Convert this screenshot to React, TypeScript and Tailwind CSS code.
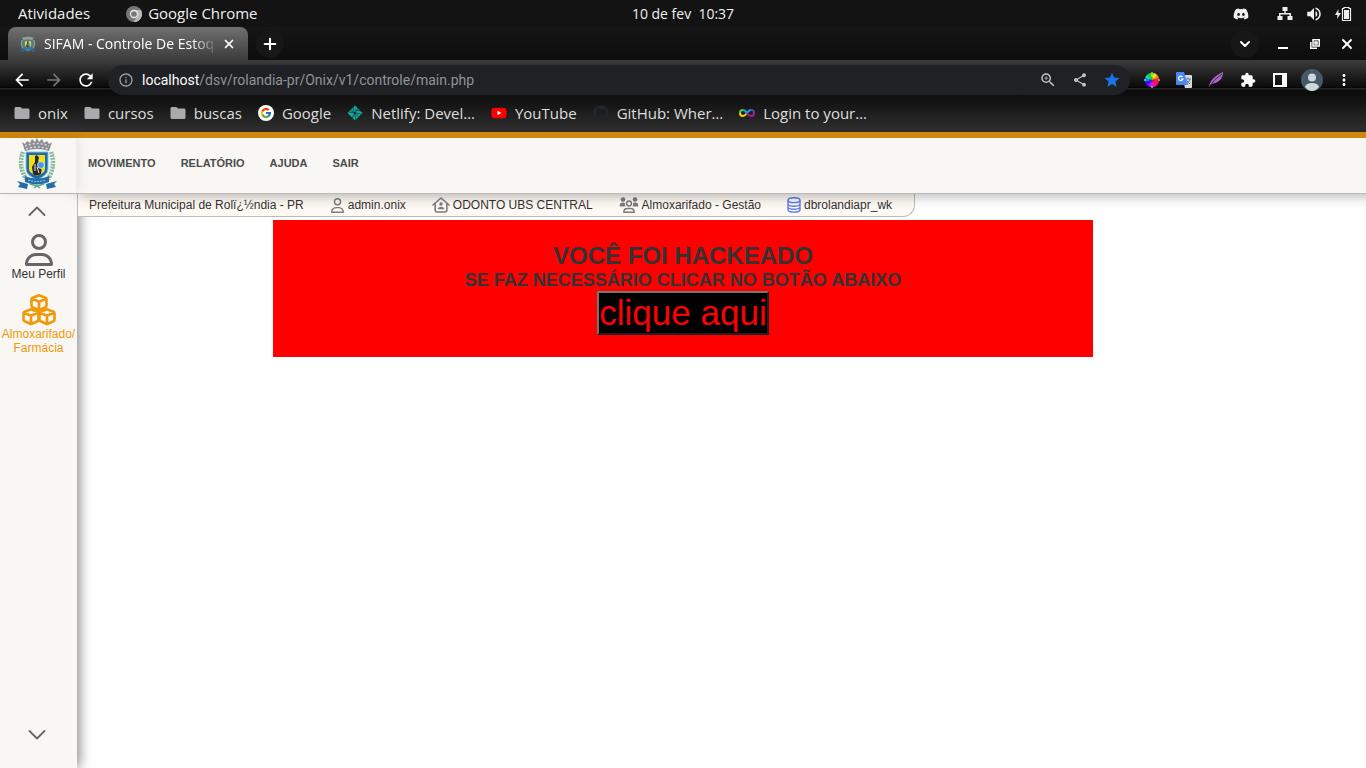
import React from "react";
import { MdArrowBack, MdArrowForward, MdRefresh, MdInfoOutline, MdZoomIn, MdShare, MdStar, MdExtension, MdMoreVert, MdFolder, MdVolumeUp } from "react-icons/md";
import { FaDiscord, FaRegUser, FaYoutube, FaGithub } from "react-icons/fa6";
import { FcGoogle } from "react-icons/fc";
import { ChevronDown, Plus, X } from "lucide-react";

function Crest({ className }: { className: string }) {
  return (
    <svg viewBox="0 0 40 52" preserveAspectRatio="none" className={className} aria-hidden="true">
      <path d="M6 14Q1 28 9 41M34 14Q39 28 31 41" fill="none" stroke="#7cc4a0" strokeWidth="4.500" strokeDasharray="2 1" />
      <path d="M4 16Q0 29 8 40M36 16Q40 29 32 40" fill="none" stroke="#d98275" strokeWidth="1.400" strokeDasharray="1 3" />
      <path d="M5 4l3 2 2-3 3 2 2-4 3 3 2-4 2 4 3-3 2 4 3-2 2 3 3-2-3 9q-12-4-24 0z" fill="#8b8e92" />
      <path d="M8 8q12-5 24 0M9 11q11-4 22 0" fill="none" stroke="#d8dadc" strokeWidth="1.500" strokeDasharray="2 2" />
      <path d="M9 14h22v17q0 6-11 11Q9 37 9 31z" fill="#1b6bb0" stroke="#8fbddd" strokeWidth="1" />
      <path d="M12 17h16v14q0 4-8 7-8-3-8-7z" fill="#f5df14" />
      <path d="M18 18q3-2 4 2l-1 3 4 4-1 9q-5 3-8 0l-1-7 3-5z" fill="#24282e" />
      <circle cx="24" cy="27" r="3.500" fill="#4f9ad0" stroke="#eee" strokeWidth=".8" />
      <path d="M18 26v7M20 29l2 6" stroke="#eee" strokeWidth="1" />
      <path d="M8 38q12 5 24 0v6q-12 5-24 0zM0 43l11 3-1 5-9-2 2-3zM40 43l-11 3 1 5 9-2-2-3z" fill="#246da9" />
      <path d="M11 42q9 3 18 0" fill="none" stroke="#9ec9e6" strokeWidth="1" strokeDasharray="2 1" />
      <path d="M13 46l7 2 7-2M17 50l3-2 3 2" fill="none" stroke="#55aa7b" strokeWidth="1.500" />
    </svg>
  );
}

function Cubes() {
  const cube = "M8.500 1.200Q9 1 9.500 1.200L15.400 3.400Q16.500 3.800 16.500 5V11.400Q16.500 12.400 15.500 12.900L9.800 15.500Q9 15.900 8.200 15.500L2.500 12.900Q1.500 12.400 1.500 11.400V5Q1.500 3.800 2.600 3.400ZM2 4.400L9 7.400L16 4.400M9 7.400V15.500";
  return (
    <svg viewBox="0 0 36 32" className="h-8 w-9" fill="none" stroke="#f09a0a" strokeWidth="2.600" strokeLinejoin="round" aria-hidden="true">
      <path d={cube} transform="translate(9 .3)" />
      <path d={cube} transform="translate(1 14.300)" />
      <path d={cube} transform="translate(17 14.300)" />
      <path d="M18 19v9" strokeWidth="2" />
    </svg>
  );
}

function Caret({ up = false }: { up?: boolean }) {
  return (
    <svg viewBox="0 0 18 10" className="h-2.5 w-[18px]" fill="none" stroke="#666" strokeWidth="1.800" strokeLinecap="round" strokeLinejoin="round" aria-hidden="true">
      <path d={up ? "M1.500 9L9 1.500L16.500 9" : "M1.500 1L9 8.500L16.500 1"} />
    </svg>
  );
}

function HouseUser() {
  return (
    <svg viewBox="0 0 18 16" className="h-4 w-[18px] shrink-0" fill="none" stroke="#7c7c7c" strokeWidth="1.600" strokeLinecap="round" strokeLinejoin="round" aria-hidden="true">
      <path d="M1 8l8-7 8 7M3.200 6.800V13q0 2 2 2h7.600q2 0 2-2V6.800" />
      <circle cx="9" cy="7" r="1.700" fill="#7c7c7c" stroke="none" />
      <path d="M5.800 12.300q0-2.600 3.200-2.600t3.200 2.600z" fill="#7c7c7c" stroke="none" />
    </svg>
  );
}

function UserGroup() {
  return (
    <svg viewBox="0 0 20 16" className="h-4 w-5 shrink-0" fill="#7c7c7c" aria-hidden="true">
      <circle cx="4" cy="2.500" r="2.300" />
      <circle cx="16" cy="2.500" r="2.300" />
      <path d="M.6 9Q.6 5.600 4 5.600q1.300 0 2 .6-.5 1.700.6 3.200H1zM19.400 9q0-3.400-3.400-3.400-1.300 0-2 .6.5 1.700-.6 3.200H19z" />
      <circle cx="10" cy="6.500" r="2.400" fill="none" stroke="#7c7c7c" strokeWidth="1.500" />
      <path d="M4.800 15.200q0-3.700 3.700-3.700h3q3.700 0 3.700 3.700z" fill="none" stroke="#7c7c7c" strokeWidth="1.500" strokeLinejoin="round" />
    </svg>
  );
}

function DatabaseIcon() {
  return (
    <svg viewBox="0 0 14 16" className="h-4 w-3.5 shrink-0" fill="none" stroke="#5c78f5" strokeWidth="1.400" aria-hidden="true">
      <ellipse cx="7" cy="3.200" rx="6" ry="2.400" />
      <path d="M1 3.300v9.400q0 2.400 6 2.400t6-2.400V3.300M1 7.200Q2 9.200 7 9.200t6-2M1 10.200Q2 12.200 7 12.200t6-2" />
    </svg>
  );
}

function ChromeMono() {
  return (
    <svg viewBox="0 0 16 16" className="size-4" aria-hidden="true">
      <circle cx="8" cy="8" r="8" fill="#777" />
      <path d="M8 4h7A8 8 0 0 1 7.500 16l4-6z" fill="#b8b8b8" />
      <circle cx="8" cy="8" r="3.500" fill="#777" stroke="#eee" strokeWidth="1.300" />
    </svg>
  );
}

function Netlify() {
  return (
    <svg viewBox="0 0 16 16" className="size-4" aria-hidden="true">
      <path d="M8 .5L15.500 8 8 15.500.5 8z" fill="#13a89c" />
      <path d="M2 7l12 2M6 2l3 13M4 5l8 7M11 3L5 13M8 5l6 1" stroke="#1b2524" strokeWidth=".6" />
      <circle cx="8" cy="8" r="1" fill="#1b2524" />
    </svg>
  );
}

function InfinityLoop() {
  return (
    <svg viewBox="0 0 16 16" className="size-4" fill="none" strokeWidth="2" aria-hidden="true">
      <path d="M8 8Q6 5 4 5" stroke="#18a7d8" />
      <path d="M4 5Q1 5 1 8" stroke="#62c83b" />
      <path d="M1 8q0 3 3 3 2 0 4-3" stroke="#e9dc18" />
      <path d="M7 9q3-4 5-4" stroke="#159ee0" />
      <path d="M12 5q3 0 3 3" stroke="#4b4aa8" />
      <path d="M15 8q0 3-3 3-2 0-4-3" stroke="#b21b91" />
    </svg>
  );
}

function ColorWheel() {
  const slices = ["#f22", "#f81", "#fe1", "#8e2", "#1d3", "#1db", "#18f", "#21f", "#81f", "#d1f", "#f1a", "#f15"];
  return (
    <svg viewBox="-8 -8 16 16" className="size-4" aria-hidden="true">
      {slices.map((fill, i) => (
        <path key={fill} d="M0 0L-2 -6.800Q0 -7.400 2 -6.800z" fill={fill} transform={`rotate(${90 - i * 30})`} />
      ))}
      <path d="M0-8v2M0 6v2M-8 0h2M6 0h2" stroke="#aaa" strokeWidth="1.500" />
    </svg>
  );
}

function Translate() {
  return (
    <svg viewBox="0 0 16 16" className="size-4" aria-hidden="true">
      <path d="M6 3h9q1 0 1 1v11q0 1-1 1H9z" fill="#d8dadd" />
      <path d="M9 7h6M12 5.500V7M14 7q-1 4-4 5M10.500 8.500L14 12" fill="none" stroke="#6b7785" />
      <path d="M1 0h7l4 13H1q-1 0-1-1V1q0-1 1-1z" fill="#4688f1" />
      <path d="M6.500 5A2.200 2.200 0 1 0 6.900 7H5" fill="none" stroke="#fff" strokeWidth="1.200" />
    </svg>
  );
}

function Feather() {
  return (
    <svg viewBox="0 0 16 16" className="size-4" aria-hidden="true">
      <path d="M1 15Q2 8 8 4t7-4q0 6-4 9t-8 3z" fill="#a765c6" />
      <path d="M1 15Q6 7 14 2" fill="none" stroke="#4a2559" strokeWidth="1" />
    </svg>
  );
}

function SidePanel() {
  return (
    <svg viewBox="0 0 14 14" className="size-3.5" aria-hidden="true">
      <path d="M0 0h14v14H0zM2 2v10h7V2z" fill="#fff" fillRule="evenodd" />
    </svg>
  );
}

function Avatar() {
  return (
    <svg viewBox="0 0 22 22" className="size-[22px]" aria-hidden="true">
      <circle cx="11" cy="11" r="11" fill="#455a64" />
      <circle cx="11" cy="8.500" r="4" fill="#cfd8dc" />
      <path d="M4 18q1-4 7-4t7 4q-3 4-7 4t-7-4z" fill="#cfd8dc" />
    </svg>
  );
}

function SystemBar() {
  return (
    <div className="grid h-[27px] grid-cols-[1fr_auto_1fr] items-center bg-[#131313] px-[18px] text-[14px] text-[#f0f0f0]">
      <div className="flex items-center gap-9 text-[15px]">
        <button>Atividades</button>
        <button className="flex items-center gap-1.5"><ChromeMono />Google Chrome</button>
      </div>
      <time className="whitespace-pre">10 de fev  10:37</time>
      <div className="-mr-1 flex items-center justify-end">
        <FaDiscord className="mr-7 size-4" />
        <svg viewBox="0 0 16 14" className="mr-3 h-3.5 w-4" fill="#eee" aria-hidden="true">
          <path d="M5.500 0h5v4H8.700v2H14v3h1.500v4h-5V9H12.500V7.500h-9V9h2v4h-5V9H2V6h5.300V4H5.500z" />
        </svg>
        <MdVolumeUp className="mr-3 size-[18px]" />
        <svg viewBox="0 0 17 16" className="h-4 w-[17px]" aria-hidden="true">
          <path d="M3.500 3L0 9h2.500L2 13l4-6H3.300z" fill="#eee" />
          <path d="M9 1.500h5v1h1.500v12h-8v-12H9z" fill="none" stroke="#eee" strokeWidth="1.200" />
          <path d="M9 4h5v9H9z" fill="#eee" />
        </svg>
      </div>
    </div>
  );
}

function TabStrip() {
  return (
    <div className="flex h-[33px] items-center bg-linear-to-b from-[#161616] to-[#0d0d0d] px-[3px] pl-2 text-white">
      <div className="flex h-[33px] w-60 items-center rounded-t-lg bg-linear-to-b from-[#707070] via-[#565656] to-[#3c3c3c] px-3">
        <Crest className="mr-2 size-4 shrink-0" />
        <span className="w-44 mask-r-from-85% text-[14px] whitespace-nowrap">SIFAM - Controle De Estoq</span>
        <button aria-label="Fechar aba" className="ml-1 shrink-0"><X className="size-3.5" strokeWidth={3} /></button>
      </div>
      <button aria-label="Nova aba" className="ml-2 flex size-7 items-center justify-center rounded-full bg-[#171717]"><Plus className="size-[18px]" strokeWidth={2.800} /></button>
      <div className="ml-auto flex items-center">
        <button aria-label="Pesquisar abas" className="mr-2 flex size-7 items-center justify-center rounded-full bg-[#171717]"><ChevronDown className="size-4" strokeWidth={3} /></button>
        <button aria-label="Minimizar" className="flex w-8 justify-center pt-2"><span className="h-0.5 w-2.5 bg-white" /></button>
        <button aria-label="Restaurar" className="flex w-8 justify-center">
          <svg viewBox="0 0 10 10" className="size-2.5" fill="none" stroke="#fff" strokeWidth="1.500" aria-hidden="true"><path d="M3 .8h6.200V7H3zM.8 3v6.200H7M5 3h2v2H5z" /></svg>
        </button>
        <button aria-label="Fechar" className="flex w-8 justify-center"><X className="size-4" strokeWidth={2.800} /></button>
      </div>
    </div>
  );
}

function ToolCell({ label, children }: { label: string; children: React.ReactNode }) {
  return <button aria-label={label} className="flex size-8 shrink-0 items-center justify-center text-white">{children}</button>;
}

function AddressBar() {
  return (
    <div className="flex h-10 items-center bg-[linear-gradient(#3c3c3c_0px,#0a0a0a_27px,#000_28px,#252525_28px,#252525_29px,#0a0a0a_30px,#121212_40px)] px-1.5">
      <ToolCell label="Voltar"><MdArrowBack className="size-5" /></ToolCell>
      <ToolCell label="Avançar"><MdArrowForward className="size-5 text-[#777]" /></ToolCell>
      <ToolCell label="Recarregar"><MdRefresh className="size-5" /></ToolCell>
      <div className="mx-1.5 flex h-[30px] grow items-center rounded-full bg-[#202124] pr-0.5 pl-2.5">
        <MdInfoOutline className="mr-2 size-4 shrink-0 text-[#9aa0a6]" />
        <a href="#main" className="grow font-['Roboto','Noto_Sans',sans-serif] text-[14px] text-[#909397]"><span className="text-white">localhost</span>/dsv/rolandia-pr/Onix/v1/controle/main.php</a>
        <ToolCell label="Zoom"><MdZoomIn className="size-[18px] text-[#bdc1c6]" /></ToolCell>
        <ToolCell label="Compartilhar"><MdShare className="size-4 text-[#bdc1c6]" /></ToolCell>
        <ToolCell label="Favorito"><MdStar className="size-[18px] text-[#1a73e8]" /></ToolCell>
      </div>
      <ToolCell label="Cores"><ColorWheel /></ToolCell>
      <ToolCell label="Traduzir"><Translate /></ToolCell>
      <ToolCell label="Pena"><Feather /></ToolCell>
      <ToolCell label="Extensões"><MdExtension className="size-4" /></ToolCell>
      <ToolCell label="Painel lateral"><SidePanel /></ToolCell>
      <ToolCell label="Perfil"><Avatar /></ToolCell>
      <ToolCell label="Menu"><MdMoreVert className="size-[18px]" /></ToolCell>
    </div>
  );
}

const folder = <MdFolder className="size-[18px] shrink-0 text-[#a9aaad]" />;
const bookmarks = [
  { label: "onix", icon: folder },
  { label: "cursos", icon: folder },
  { label: "buscas", icon: folder },
  { label: "Google", icon: <span className="rounded-full bg-white p-0.5"><FcGoogle className="size-3" /></span> },
  { label: "Netlify: Devel…", icon: <Netlify /> },
  { label: "YouTube", icon: <FaYoutube className="size-4 bg-[radial-gradient(#fff_25%,transparent_26%)] text-[#f00]" /> },
  { label: "GitHub: Wher…", icon: <FaGithub className="size-4 text-[#20262c]" /> },
  { label: "Login to your…", icon: <InfinityLoop /> },
];

function Bookmarks() {
  return (
    <nav aria-label="Favoritos" className="flex h-8 items-center gap-4 bg-linear-to-b from-[#111] to-[#323232] px-3.5 pb-1.5 text-[15px] text-[#dedede]">
      {bookmarks.map((b) => (
        <a key={b.label} href="#main" className="flex items-center gap-2 whitespace-nowrap">
          <span className="flex size-4 items-center justify-center">{b.icon}</span>
          {b.label}
        </a>
      ))}
    </nav>
  );
}

function Sidebar() {
  return (
    <aside className="z-10 flex w-[77px] shrink-0 flex-col items-center bg-[#f8f7f3] pt-3 pb-7 text-center text-[12px] leading-[14px] text-[#333] shadow-[2px_0_12px_rgba(0,0,0,0.5)]">
      <button aria-label="Subir" className="mr-1"><Caret up /></button>
      <a href="#perfil" className="mt-[18px] flex flex-col items-center">
        <FaRegUser className="h-8 w-7 text-[#666]" preserveAspectRatio="none" />
        <span className="mt-px">Meu Perfil</span>
      </a>
      <a href="#almoxarifado" className="mt-[13px] flex flex-col items-center text-[#f09a0a]">
        <Cubes />
        <span className="mt-px">Almoxarifado/<br />Farmácia</span>
      </a>
      <button aria-label="Descer" className="mt-auto mr-1"><Caret /></button>
    </aside>
  );
}

function StatusBar() {
  return (
    <div className="z-20 flex h-[23px] w-fit items-center gap-[26px] rounded-br-xl border-r border-b border-l border-[#bbb] bg-[#fff9f3] pr-[22px] pl-[11px] text-[12px] whitespace-nowrap text-[#333]">
      <span>Prefeitura Municipal de Rolï¿½ndia - PR</span>
      <span className="flex items-center gap-[3px]"><FaRegUser className="size-[15px] text-[#7c7c7c]" />admin.onix</span>
      <span className="flex items-center gap-[3px]"><HouseUser />ODONTO UBS CENTRAL</span>
      <span className="flex items-center gap-[3px]"><UserGroup />Almoxarifado - Gestão</span>
      <span className="flex items-center gap-[3px]"><DatabaseIcon />dbrolandiapr_wk</span>
    </div>
  );
}

export default function App() {
  return (
    <div className="flex min-h-screen flex-col bg-white font-['Liberation_Sans',Arial,sans-serif]">
      <header className="font-['Open_Sans','Noto_Sans',sans-serif]">
        <SystemBar />
        <TabStrip />
        <AddressBar />
        <Bookmarks />
      </header>
      <div className="z-30 flex h-[62px] border-t-[6px] border-b border-t-[#d1860d] border-b-[#bbb] bg-[#f8f7f3] shadow-[80px_2px_12px_rgba(0,0,0,0.3)]">
        <div className="flex w-[77px] shrink-0 items-start justify-center border-r border-[#eee] pr-0.5 shadow-[2px_0_10px_rgba(0,0,0,0.08)]"><Crest className="h-[52px] w-10" /></div>
        <nav aria-label="Principal" className="flex items-center gap-[25px] pb-1 pl-[11px] text-[11px] font-bold text-[#4b4b4b]">
          <a href="#movimento">MOVIMENTO</a>
          <a href="#relatorio">RELATÓRIO</a>
          <a href="#ajuda">AJUDA</a>
          <a href="#sair">SAIR</a>
        </nav>
      </div>
      <div className="flex grow">
        <Sidebar />
        <main id="main" className="flex min-w-0 grow flex-col">
          <StatusBar />
          <section className="mt-[3px] ml-[calc(20vw-77px)] flex w-[60vw] flex-col items-center bg-[red] pt-[22px] pb-[22px] text-center font-bold text-[#333]">
            <h1 className="text-[24px] leading-7">VOCÊ FOI HACKEADO</h1>
            <h2 className="text-[18px] leading-5">SE FAZ NECESSÁRIO CLICAR NO BOTÃO ABAIXO</h2>
            <button className="mt-px border-2 border-t-[#767676] border-r-[#212121] border-b-[#212121] border-l-[#767676] bg-black text-[35px] leading-10 font-normal text-[red]">clique aqui</button>
          </section>
        </main>
      </div>
    </div>
  );
}
